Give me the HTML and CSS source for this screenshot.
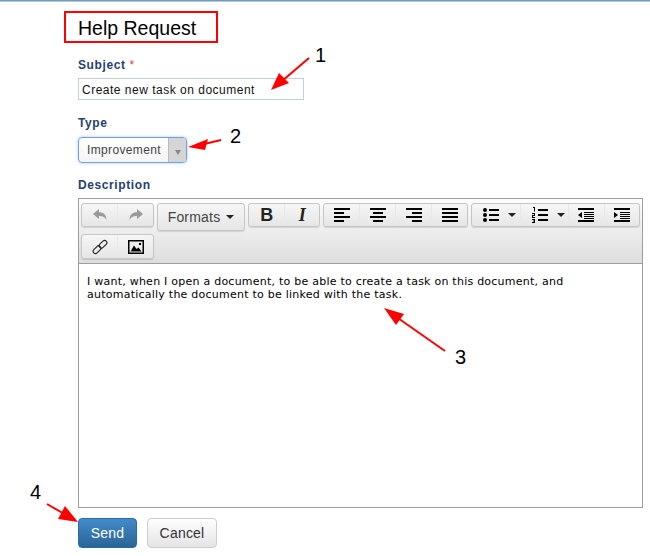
FILE: index.html
```html
<!DOCTYPE html>
<html lang="en">
<head>
<meta charset="utf-8">
<title>Help Request</title>
<link rel="stylesheet" href="styles.css">
</head>
<body>
<div class="topbar"></div>
<main class="form">
  <h1 class="title">Help Request</h1>
  <label class="label subject-label">Subject <span class="req">*</span></label>
  <div class="input">Create new task on document</div>
  <label class="label type-label">Type</label>
  <div class="select"><span class="select-text">Improvement</span><span class="select-btn"><i class="caret-grey"></i></span></div>
  <label class="label desc-label">Description</label>
  <div class="editor">
    <div class="toolbar">
      <div class="row">
        <div class="group g-history">
          <span class="tb"><svg class="ic" viewBox="0 0 16 16"><path fill="#9a9a9a" d="M1 7l6-5v3.200c4.500 0 7.500 2.300 7.500 8.300-1.300-3.400-3.500-4.500-7.500-4.500V12z"/></svg></span>
          <span class="tb"><svg class="ic" viewBox="0 0 16 16"><path fill="#9a9a9a" d="M15 7L9 2v3.200c-4.500 0-7.500 2.300-7.500 8.300C2.800 10.100 5 9 9 9v3z"/></svg></span>
        </div>
        <div class="group formats"><span>Formats</span><i class="caret"></i></div>
        <div class="group g-style">
          <span class="tb glyph bold">B</span>
          <span class="tb glyph italic">I</span>
        </div>
        <div class="group g-align">
          <span class="tb"><svg class="ic" viewBox="0 0 16 16"><path d="M0 1h16v2H0zM0 5h10v2H0zM0 9h16v2H0zM0 13h10v2H0z"/></svg></span>
          <span class="tb"><svg class="ic" viewBox="0 0 16 16"><path d="M0 1h16v2H0zM3 5h10v2H3zM0 9h16v2H0zM3 13h10v2H3z"/></svg></span>
          <span class="tb"><svg class="ic" viewBox="0 0 16 16"><path d="M0 1h16v2H0zM6 5h10v2H6zM0 9h16v2H0zM6 13h10v2H6z"/></svg></span>
          <span class="tb"><svg class="ic" viewBox="0 0 16 16"><path d="M0 1h16v2H0zM0 5h16v2H0zM0 9h16v2H0zM0 13h16v2H0z"/></svg></span>
        </div>
        <div class="group g-lists">
          <span class="tb wide"><svg class="ic" viewBox="0 0 16 16"><circle cx="2" cy="3" r="2"/><circle cx="2" cy="8" r="2"/><circle cx="2" cy="13" r="2"/><path d="M6 2h10v2H6zM6 7h10v2H6zM6 12h10v2H6z"/></svg><i class="caret"></i></span>
          <span class="tb wide"><svg class="ic" viewBox="0 0 16 16"><path d="M1 0h2v4.500H2V1H1zM0 6h3v3H1v1h2v1H0V8h2V7H0zM0 12h3v4H0v-1h2v-.5H1v-1h1V13H0zM6 2h10v2H6zM6 7h10v2H6zM6 12h10v2H6z"/></svg><i class="caret"></i></span>
          <span class="tb"><svg class="ic" viewBox="0 0 16 16"><path d="M0 1h16v2H0zM6 5h10v1H6zM6 7h10v1H6zM6 9h10v1H6zM6 11h10v1H6zM0 13h16v2H0zM4 5v6L0 8z"/></svg></span>
          <span class="tb"><svg class="ic" viewBox="0 0 16 16"><path d="M0 1h16v2H0zM6 5h10v1H6zM6 7h10v1H6zM6 9h10v1H6zM6 11h10v1H6zM0 13h16v2H0zM0 5v6l4-3z"/></svg></span>
        </div>
      </div>
      <div class="row">
        <div class="group g-history g-tall">
          <span class="tb"><svg class="ic" viewBox="0 0 16 16"><g fill="none" stroke="#222" stroke-width="1.100"><rect x="8.700" y="0.800" width="4.600" height="9" rx="2.300" transform="rotate(45 11 5.300)"/><rect x="2.700" y="6.200" width="4.600" height="9" rx="2.300" transform="rotate(45 5 10.700)"/></g></svg></span>
          <span class="tb"><svg class="ic" viewBox="0 0 16 16"><path fill-rule="evenodd" d="M0 1h16v14H0zM1.500 2.500v11h13v-11z"/><path d="M2.500 12.500l3.500-6 2.500 3.500 2-1.500 3 4z"/><rect x="11" y="4" width="2" height="2"/></svg></span>
        </div>
      </div>
    </div>
    <div class="content">I want, when I open a document, to be able to create a task on this document, and<br>automatically the document to be linked with the task.</div>
  </div>
  <div class="actions">
    <button class="btn primary" type="button">Send</button>
    <button class="btn" type="button">Cancel</button>
  </div>
</main>
<svg class="arrows" width="650" height="556" viewBox="0 0 650 556">
  <g stroke="#f00" stroke-width="2" fill="#f00">
    <line x1="309" y1="58" x2="282" y2="81"/>
    <line x1="221" y1="140" x2="200" y2="145"/>
    <line x1="445" y1="351" x2="395" y2="316"/>
    <line x1="47" y1="504" x2="66" y2="515"/>
  </g>
  <g fill="#f00">
    <polygon points="271,90 279,73 289,83"/>
    <polygon points="188,147 208,139 205,150"/>
    <polygon points="384,308 404,314 396,325"/>
    <polygon points="78,522 58,519 65,506"/>
  </g>
</svg>
<span class="num n1">1</span>
<span class="num n2">2</span>
<span class="num n3">3</span>
<span class="num n4">4</span>
</body>
</html>
```
FILE: styles.css
```css
* { box-sizing: border-box; }
html, body { margin: 0; padding: 0; }
body {
  width: 650px;
  height: 556px;
  position: relative;
  overflow: hidden;
  background: #fff;
  font-family: "Liberation Sans", Arial, sans-serif;
}
.topbar {
  height: 2px;
  background: #6f98bd;
  border-bottom: 1px solid #b9c9d8;
}
.form {
  padding: 9px 0 0 78px;
  display: flex;
  flex-direction: column;
  align-items: flex-start;
}
.title {
  margin: 0 0 0 -14px;
  width: 154px;
  height: 32px;
  border: 2px solid #f00;
  padding-left: 12px;
  font-size: 19.500px;
  font-weight: 400;
  line-height: 30px;
  color: #000;
}
.label {
  display: block;
  font-size: 12px;
  font-weight: 700;
  line-height: 15px;
  letter-spacing: 0.6px;
  color: #253f72;
}
.subject-label { margin-top: 15px; }
.req { color: #e33; font-weight: 400; }
.input {
  margin-top: 5px;
  width: 226px;
  height: 22px;
  border: 1px solid #bfd0df;
  padding-left: 3px;
  font-size: 12px;
  line-height: 22px;
  letter-spacing: 0.5px;
  color: #111;
}
.type-label { margin-top: 16px; }
.select {
  margin-top: 6px;
  width: 109px;
  height: 26px;
  border: 1px solid #6fa0ea;
  border-radius: 4px;
  box-shadow: 0 0 3px rgba(90, 140, 230, .5);
  display: flex;
  overflow: hidden;
  background: linear-gradient(#fff, #f4f5f6);
}
.select-text {
  flex: 1;
  padding-left: 8px;
  font-size: 12px;
  line-height: 24px;
  letter-spacing: 0.35px;
  color: #444;
}
.select-btn {
  width: 18px;
  background: #d5d5d5;
  border-left: 1px solid #bbb;
  display: flex;
  align-items: center;
  justify-content: center;
}
.caret-grey {
  margin-top: 4px;
  border-left: 3.500px solid transparent;
  border-right: 3.500px solid transparent;
  border-top: 5px solid #888;
}
.desc-label { margin-top: 15px; }
.editor {
  margin-top: 5px;
  width: 565px;
  height: 310px;
  border: 1px solid #9e9e9e;
  display: flex;
  flex-direction: column;
}
.toolbar {
  height: 65px;
  flex: none;
  border-bottom: 1px solid #9e9e9e;
  background: linear-gradient(#fdfdfd, #ddd);
  padding: 4px 0 0 2px;
}
.row {
  display: flex;
  align-items: flex-start;
  gap: 3px;
  margin-bottom: 3px;
  height: 28px;
}
.group {
  height: 24px;
  flex: none;
  display: flex;
  border: 1px solid #c6c6c6;
  border-radius: 3px;
  background: linear-gradient(#f6f6f6, #e6e6e6);
  box-shadow: 0 1px 1px rgba(0, 0, 0, .12);
}
.g-history { width: 73px; }
.g-style { width: 72px; }
.g-align { width: 145px; }
.g-lists { width: 169px; }
.g-tall { height: 25px; }
.tb {
  flex: 1 1 0;
  min-width: 0;
  height: 100%;
  display: flex;
  align-items: center;
  justify-content: center;
  gap: 6px;
  border-left: 1px solid #e9e9e9;
}
.tb:first-child { border-left: 0; }
.tb.wide { flex: 0 0 48px; gap: 9px; padding-left: 7px; }
.ic { width: 16px; height: 16px; display: block; flex: none; }
.glyph { font-size: 18px; line-height: 1; color: #222; }
.bold { font-weight: 700; padding-left: 1px; }
.italic { font-family: "Liberation Serif", serif; font-style: italic; font-weight: 700; padding-left: 1px; }
.formats {
  width: 88px;
  height: 28px;
  align-items: center;
  justify-content: center;
  gap: 6px;
  font-size: 14px;
  letter-spacing: 0.2px;
  color: #444;
}
.caret {
  flex: none;
  border-left: 4px solid transparent;
  border-right: 4px solid transparent;
  border-top: 4px solid #222;
}
.content {
  padding: 11px 8px 0 8px;
  font-family: "DejaVu Sans", Verdana, sans-serif;
  font-size: 11px;
  line-height: 13px;
  letter-spacing: 0.24px;
  color: #000;
}
.actions {
  margin-top: 10px;
  display: flex;
  gap: 10px;
}
.btn {
  height: 30px;
  width: 70px;
  padding: 0;
  border: 1px solid #ccc;
  border-radius: 4px;
  background: linear-gradient(#fff, #e4e4e4);
  font-family: "Liberation Sans", Arial, sans-serif;
  font-size: 14px;
  letter-spacing: 0.2px;
  color: #333;
}
.btn.primary {
  width: 59px;
  border-color: #2a6ca6;
  background: linear-gradient(#428bca, #2a6496);
  color: #fff;
}
.arrows { position: absolute; left: 0; top: 0; pointer-events: none; }
.num {
  position: absolute;
  font-size: 20px;
  line-height: 20px;
  color: #000;
}
.n1 { left: 315px; top: 45px; }
.n2 { left: 230px; top: 126px; }
.n3 { left: 455px; top: 347px; }
.n4 { left: 30px; top: 482px; }
```
